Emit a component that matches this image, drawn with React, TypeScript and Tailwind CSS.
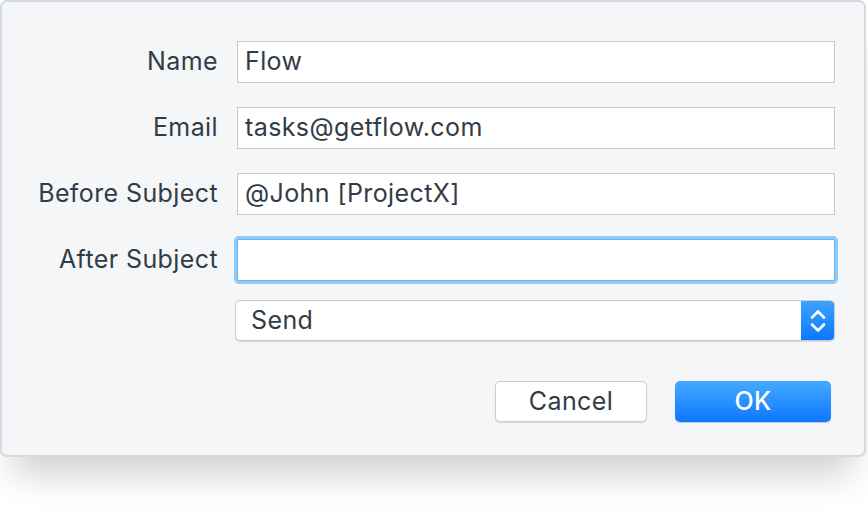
const FONT = { fontFamily: "Inter, 'Open Sans', sans-serif" };

const TEXT = "text-[25px] text-[#323c47] tracking-[0.4px]";
const LABEL = `w-[216px] shrink-0 text-right ${TEXT}`;
const INPUT = `ml-[19px] w-[598px] h-[42px] bg-white border border-[#c7c9cc] pl-[7px] flex items-center ${TEXT}`;

function Row({ label, value, focused }: { label: string; value?: string; focused?: boolean }) {
  return (
    <div className="flex items-center h-[42px]">
      <div className={LABEL}>{label}</div>
      {focused ? (
        <div className="ml-[19px] w-[598px] h-[42px] bg-white border border-[#6fb0ea] rounded-[2px] ring-[3px] ring-[#8fcbfa]" />
      ) : (
        <div className={INPUT}>{value}</div>
      )}
    </div>
  );
}

export default function App() {
  return (
    <div className="w-[868px] h-[510px] bg-white relative overflow-hidden" style={FONT}>
      <div className="w-[866px] h-[457px] bg-[#f5f6f8] border-2 border-[#d4d9e2] rounded-[7px] shadow-[0_30px_36px_-14px_rgba(0,0,0,0.2)] pt-[39px]">
        <div className="flex flex-col gap-[24px]">
          <Row label="Name" value="Flow" />
          <Row label="Email" value="tasks@getflow.com" />
          <Row label="Before Subject" value="@John [ProjectX]" />
          <Row label="After Subject" focused />
        </div>
        <div className="flex mt-[19px] pl-[233px]">
          <div className="w-[600px] h-[41px] bg-white border border-[#c9cbce] rounded-[5px] shadow-[0_1px_1px_rgba(0,0,0,0.12)] flex items-center overflow-hidden">
            <div className={`flex-1 pl-[15px] ${TEXT}`}>Send</div>
            <div className="w-[33px] h-full bg-gradient-to-b from-[#3aa4ff] to-[#0a78ff] flex items-center justify-center">
              <svg width="18" height="26" viewBox="0 0 18 26" fill="none" stroke="white" strokeWidth="2.6" strokeLinecap="round" strokeLinejoin="round">
                <path d="M3 9.5 L9 3.5 L15 9.5" />
                <path d="M3 16.5 L9 22.5 L15 16.5" />
              </svg>
            </div>
          </div>
        </div>
        <div className="flex justify-end gap-[28px] mt-[40px] pr-[33px]">
          <div className={`w-[152px] h-[41px] bg-white border border-[#c9cbce] rounded-[5px] shadow-[0_1px_1px_rgba(0,0,0,0.12)] flex items-center justify-center ${TEXT}`}>
            Cancel
          </div>
          <div className="w-[156px] h-[41px] rounded-[5px] bg-gradient-to-b from-[#44aaff] to-[#0a76ff] shadow-[0_1px_1px_rgba(0,60,160,0.25)] flex items-center justify-center text-[25px] tracking-[0.4px] text-white font-medium">
            OK
          </div>
        </div>
      </div>
    </div>
  );
}
